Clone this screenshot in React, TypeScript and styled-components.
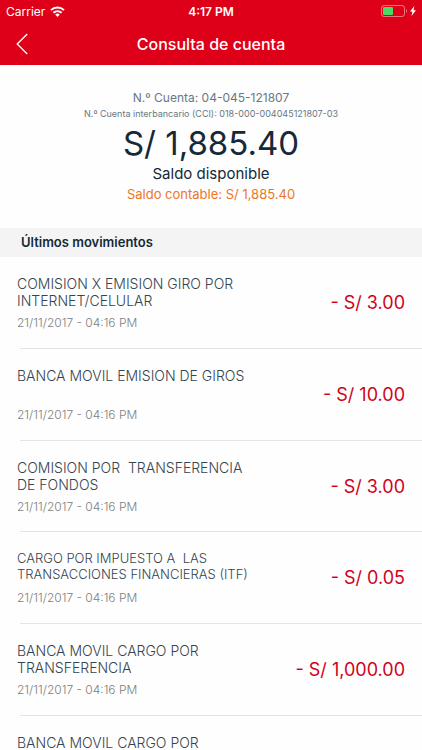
import React from "react";
import styled, { createGlobalStyle } from "styled-components";

const GlobalStyle = createGlobalStyle`
  *, *::before, *::after { box-sizing: border-box; }
  html { height: 100%; }
  body {
    margin: 0;
    height: 100%;
    overflow: hidden;
    background: #fefefe;
    color: #152938;
    font-family: Inter, "Liberation Sans", sans-serif;
  }
  #root { height: 100%; }
  h1, h2, h3, p, ul { margin: 0; padding: 0; font-weight: 400; }
`;

const Screen = styled.div`
  height: 100%;
  display: flex;
  flex-direction: column;
`;

const Header = styled.header`
  flex: none;
  background: #dd0018;
  color: #fff;
`;

const StatusBar = styled.div`
  display: grid;
  grid-template-columns: 1fr auto 1fr;
  align-items: center;
  height: 22px;
  padding: 0 6px;
  font-size: 12px;
`;

const Carrier = styled.div`
  display: flex;
  align-items: center;
  gap: 5px;
`;

const Time = styled.time`
  font-weight: 600;
`;

const Power = styled.div`
  display: flex;
  align-items: center;
  justify-content: flex-end;
  gap: 3px;
`;

const NavBar = styled.div`
  display: grid;
  grid-template-columns: 44px 1fr 44px;
  align-items: center;
  height: 43px;
`;

const BackButton = styled.button`
  display: flex;
  align-items: center;
  height: 43px;
  padding: 0 0 0 16px;
  border: 0;
  background: none;
  color: inherit;
`;

const Title = styled.h1`
  font-size: 16px;
  font-weight: 500;
  line-height: 20px;
  text-align: center;
`;

const Summary = styled.section`
  flex: none;
  display: flex;
  flex-direction: column;
  align-items: center;
  padding: 25px 16px 24px;
  text-align: center;
`;

const AccountNumber = styled.p`
  color: #687883;
  font-size: 12px;
  line-height: 16px;
`;

const InterbankNumber = styled.p`
  color: #687883;
  font-size: 9px;
  line-height: 16px;
`;

const Balance = styled.p`
  font-size: 33px;
  line-height: 42px;
`;

const BalanceLabel = styled.p`
  font-size: 15px;
  line-height: 20px;
`;

const LedgerBalance = styled.p`
  color: #ec7625;
  font-size: 13px;
  line-height: 20px;
`;

const SectionTitle = styled.h2`
  flex: none;
  padding: 0 21px;
  background: #f4f4f4;
  font-size: 13px;
  font-weight: 600;
  line-height: 29px;
`;

const Movements = styled.ul`
  flex: 1;
  min-height: 0;
  overflow: hidden;
  list-style: none;
`;

const Movement = styled.li`
  display: grid;
  grid-template-columns: 1fr auto;
  align-items: center;
  height: 92px;
  padding: 0 17px;
  background: linear-gradient(#e3e4e5, #e3e4e5) 20px 100% / 100% 1px no-repeat;

  &:nth-child(3n) {
    height: 91px;
  }
`;

const Details = styled.div`
  align-self: start;
  padding-top: 18px;
`;

const Description = styled.h3<{ $compact?: boolean }>`
  min-height: 34px;
  color: #344450;
  font-size: ${(p) => (p.$compact ? 13 : 14)}px;
  font-weight: 300;
  line-height: ${(p) => (p.$compact ? 16 : 17)}px;
  white-space: pre;
`;

const MovementDate = styled.time`
  display: block;
  margin-top: 6px;
  color: #808080;
  font-size: 12px;
  font-weight: 300;
  line-height: 16px;
`;

const Amount = styled.p`
  color: #d0021b;
  font-size: 18px;
  line-height: 24px;
`;

type MovementData = {
  text: string;
  date?: string;
  amount?: string;
  compact?: boolean;
};

const DATE = "21/11/2017 - 04:16 PM";

const movements: MovementData[] = [
  { text: "COMISION X EMISION GIRO POR\nINTERNET/CELULAR", date: DATE, amount: "- S/ 3.00" },
  { text: "BANCA MOVIL EMISION DE GIROS", date: DATE, amount: "- S/ 10.00" },
  { text: "COMISION POR  TRANSFERENCIA\nDE FONDOS", date: DATE, amount: "- S/ 3.00" },
  { text: "CARGO POR IMPUESTO A  LAS\nTRANSACCIONES FINANCIERAS (ITF)", date: DATE, amount: "- S/ 0.05", compact: true },
  { text: "BANCA MOVIL CARGO POR\nTRANSFERENCIA", date: DATE, amount: "- S/ 1,000.00" },
  { text: "BANCA MOVIL CARGO POR" },
];

const WifiIcon = () => (
  <svg width="15" height="11" viewBox="0 0 15 11" fill="none" stroke="#fff" strokeWidth="2" aria-label="Wi-Fi">
    <path d="M1 4.1a9.4 9.4 0 0 1 13 0" />
    <path d="M3.4 6.8a6 6 0 0 1 8.2 0" />
    <path d="M5.2 8.6a3.4 3.4 0 0 1 4.6 0L7.5 11z" fill="#fff" stroke="none" />
  </svg>
);

const BatteryIcon = () => (
  <svg width="26" height="12" viewBox="0 0 26 12" fill="none" aria-label="Batería">
    <rect x=".5" y=".5" width="23" height="11" rx="2.5" stroke="#fff" strokeOpacity=".45" />
    <rect x="2" y="2" width="10" height="8" rx="1" fill="#4cd964" />
    <path d="M25 4c1.2.7 1.2 3.3 0 4z" fill="#fff" fillOpacity=".5" />
  </svg>
);

const BoltIcon = () => (
  <svg width="6" height="10" viewBox="0 0 6 10" fill="#fff" aria-hidden="true">
    <path d="M4.4 0 0 5.6h2.4L1.5 10 6 4.3H3.5z" />
  </svg>
);

const BackIcon = () => (
  <svg width="12" height="22" viewBox="0 0 12 22" fill="none" stroke="#fff" strokeWidth="1.3" aria-hidden="true">
    <path d="M11.2 1 1.2 11l10 10" />
  </svg>
);

export default function App() {
  return (
    <Screen>
      <GlobalStyle />
      <Header>
        <StatusBar>
          <Carrier>
            Carrier
            <WifiIcon />
          </Carrier>
          <Time>4:17 PM</Time>
          <Power>
            <BatteryIcon />
            <BoltIcon />
          </Power>
        </StatusBar>
        <NavBar>
          <BackButton type="button" aria-label="Volver">
            <BackIcon />
          </BackButton>
          <Title>Consulta de cuenta</Title>
        </NavBar>
      </Header>
      <Summary>
        <AccountNumber>N.º Cuenta: 04-045-121807</AccountNumber>
        <InterbankNumber>N.º Cuenta interbancario (CCI): 018-000-004045121807-03</InterbankNumber>
        <Balance>S/ 1,885.40</Balance>
        <BalanceLabel>Saldo disponible</BalanceLabel>
        <LedgerBalance>Saldo contable: S/ 1,885.40</LedgerBalance>
      </Summary>
      <SectionTitle>Últimos movimientos</SectionTitle>
      <Movements>
        {movements.map((m, i) => (
          <Movement key={i}>
            <Details>
              <Description $compact={m.compact}>{m.text}</Description>
              {m.date && <MovementDate>{m.date}</MovementDate>}
            </Details>
            {m.amount && <Amount>{m.amount}</Amount>}
          </Movement>
        ))}
      </Movements>
    </Screen>
  );
}
